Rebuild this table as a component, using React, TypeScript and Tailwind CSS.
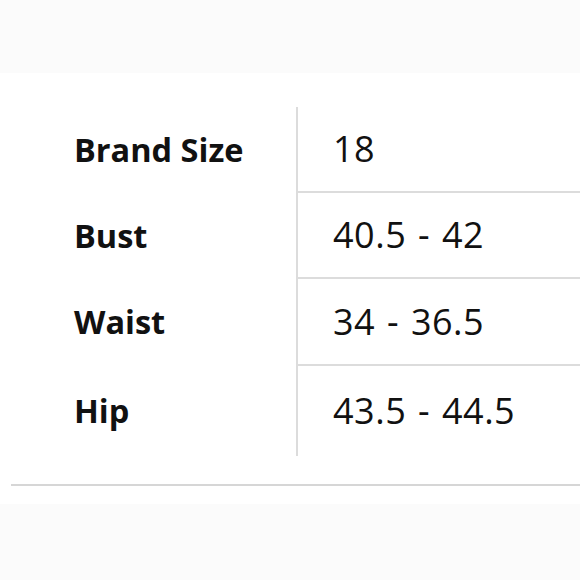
import React from "react";

const rows = [
  { label: "Brand Size", value: "18" },
  { label: "Bust", value: "40.5 - 42" },
  { label: "Waist", value: "34 - 36.5" },
  { label: "Hip", value: "43.5 - 44.5" },
];

const heights = ["h-[86px]", "h-[86px]", "h-[87px]", "h-[90px]"];

export default function App() {
  return (
    <div className="w-[580px] h-[580px] bg-white flex flex-col overflow-hidden font-['Open_Sans',sans-serif] text-[#111]">
      <div className="h-[73px] bg-[#fbfbfb]" />
      <div className="pt-[34px]">
        {rows.map((row, i) => (
          <div key={row.label} className={`flex ${heights[i]}`}>
            <div className="w-[296px] shrink-0 flex items-center pl-[74px] text-[32.5px] font-bold">
              {row.label}
            </div>
            <div
              className={`flex-1 flex items-center pl-[35px] border-l-2 border-[#dcdcdc] text-[36px] tracking-[0.5px] [word-spacing:2px] ${
                i < rows.length - 1 ? "border-b-2" : ""
              }`}
            >
              {row.value}
            </div>
          </div>
        ))}
      </div>
      <div className="mt-[28px] ml-[11px] h-[2px] bg-[#d6d6d6]" />
      <div className="mt-[18px] flex-1 bg-[#fbfbfb]" />
    </div>
  );
}
